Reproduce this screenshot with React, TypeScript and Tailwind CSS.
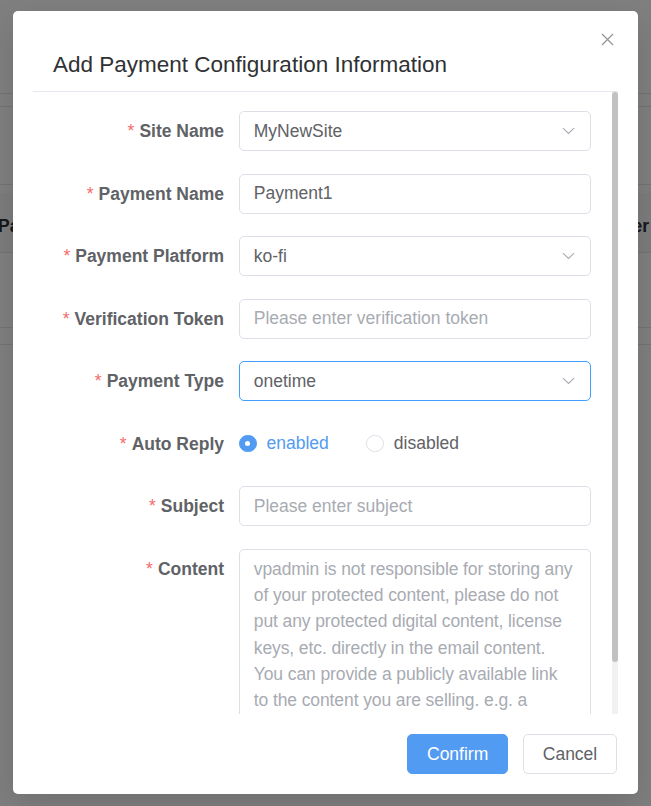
import {useState} from "react";

const labelCls = "w-[206px] shrink-0 pr-[15px] text-right leading-[40px] font-bold text-[#606266] text-[17.5px]";
const boxCls = "h-[40px] w-[352px] rounded-[5px] border bg-white flex items-center px-[13.75px] text-[17.5px] text-[#606266]";

function Chevron() {
    return (
        <svg width="13" height="8" viewBox="0 0 13 8" className="shrink-0">
            <path d="M1 1.2 L6.5 6.5 L12 1.2" fill="none" stroke="#a8abb2" strokeWidth="1.1"/>
        </svg>
    )
}

function Row({label, children}: { label: string, children: React.ReactNode }) {
    return (
        <div className="flex mb-[22.5px]">
            <label className={labelCls}>
                <span className="text-[#f56c6c] font-normal mr-[5px]">*</span>{label}
            </label>
            {children}
        </div>
    )
}

function SelectBox({value, focused}: { value: string, focused?: boolean }) {
    return (
        <div className={`${boxCls} justify-between pr-[15px] ${focused ? 'border-[#409eff]' : 'border-[#dcdfe6]'}`}>
            <span>{value}</span>
            <Chevron/>
        </div>
    )
}

function TextBox({value, placeholder}: { value?: string, placeholder?: string }) {
    return (
        <input defaultValue={value} placeholder={placeholder}
               className={`${boxCls} border-[#dcdfe6] outline-none placeholder:text-[#a8abb2]`}/>
    )
}

function BackgroundPage() {
    return (
        <div className="w-full h-full bg-white text-[#303133]">
            <div className="h-[94px] border-b border-[#e4e7ed]"/>
            <div className="h-[12px]"/>
            <div className="h-[79px] border-y border-[#e4e7ed]"/>
            <div className="h-[8px]"/>
            <div className="h-[60px] pt-[8px] bg-[#f8f9fb] border-b border-[#e4e7ed] flex items-center justify-between font-bold text-[17.5px]">
                <span className="-ml-[2px]">Payment</span>
                <span className="mr-[2px]">Order</span>
            </div>
            <div className="h-[75px] border-b border-[#e4e7ed]"/>
            <div className="h-[17px] border-b border-[#e4e7ed]"/>
        </div>
    )
}

export default function App() {
    const [autoReply, setAutoReply] = useState<'enabled' | 'disabled'>('enabled');

    return (
        <div className="relative w-[651px] h-[806px] overflow-hidden font-['Liberation_Sans',Arial,sans-serif]">
            <BackgroundPage/>
            <div className="absolute inset-0 bg-black/50"/>

            <div className="absolute left-[13px] top-[11px] w-[625px] h-[783px] bg-white rounded-[5px] shadow-[0_12px_32px_rgba(0,0,0,0.12)] flex flex-col">
                <div className="h-[80px] shrink-0 pl-[40px] pt-[37px] relative">
                    <h1 className="text-[22.5px] leading-[33.75px] text-[#303133]">Add Payment Configuration Information</h1>
                    <button className="absolute top-[22px] right-[24px] w-[13px] h-[13px]">
                        <svg width="13" height="13" viewBox="0 0 13 13">
                            <path d="M1 1 L12 12 M12 1 L1 12" stroke="#909399" strokeWidth="1.2"/>
                        </svg>
                    </button>
                </div>
                <div className="mx-[20px] border-t border-[#e4e7ed]"/>

                <div className="mx-[20px] h-[622px] shrink-0 flex">
                    <div className="flex-1 overflow-hidden">
                        <div className="pt-[19px]">
                            <Row label="Site Name"><SelectBox value="MyNewSite"/></Row>
                            <Row label="Payment Name"><TextBox value="Payment1"/></Row>
                            <Row label="Payment Platform"><SelectBox value="ko-fi"/></Row>
                            <Row label="Verification Token"><TextBox placeholder="Please enter verification token"/></Row>
                            <Row label="Payment Type"><SelectBox value="onetime" focused/></Row>
                            <Row label="Auto Reply">
                                <div className="h-[40px] flex items-center text-[17.5px]">
                                    {(['enabled', 'disabled'] as const).map(opt => (
                                        <button key={opt} onClick={() => setAutoReply(opt)}
                                                className="flex items-center mr-[37.5px]">
                                            {autoReply === opt ? (
                                                <span className="w-[17.5px] h-[17.5px] rounded-full bg-[#529bf2] border border-[#529bf2] flex items-center justify-center">
                                                    <span className="w-[5px] h-[5px] rounded-full bg-white"/>
                                                </span>
                                            ) : (
                                                <span className="w-[17.5px] h-[17.5px] rounded-full bg-white border border-[#dcdfe6]"/>
                                            )}
                                            <span className={`pl-[10px] ${autoReply === opt ? 'text-[#529bf2]' : 'text-[#606266]'}`}>{opt}</span>
                                        </button>
                                    ))}
                                </div>
                            </Row>
                            <Row label="Subject"><TextBox placeholder="Please enter subject"/></Row>
                            <Row label="Content">
                                <textarea
                                    placeholder="vpadmin is not responsible for storing any of your protected content, please do not put any protected digital content, license keys, etc. directly in the email content. You can provide a publicly available link to the content you are selling. e.g. a downloadable link to a file hosted on your own cloud storage."
                                    className="w-[352px] h-[200px] resize-none rounded-[5px] border border-[#dcdfe6] pl-[13.75px] pr-[15px] py-[6.25px] text-[17.5px] leading-[1.5] tracking-[-0.1px] text-[#606266] outline-none placeholder:text-[#a8abb2]"/>
                            </Row>
                        </div>
                    </div>
                    <div className="w-[6px] shrink-0 bg-[#f1f1f1] flex flex-col">
                        <div className="h-[570px] bg-[#c1c1c1] rounded-[3px]"/>
                    </div>
                </div>

                <div className="h-[80px] shrink-0 flex items-center justify-end gap-[15px] pr-[21px]">
                    <button className="h-[40px] px-[18.75px] rounded-[5px] bg-[#529bf2] border border-[#529bf2] text-white text-[17.5px]">Confirm</button>
                    <button className="h-[40px] px-[18.75px] rounded-[5px] bg-white border border-[#dcdfe6] text-[#606266] text-[17.5px]">Cancel</button>
                </div>
            </div>
        </div>
    )
}
